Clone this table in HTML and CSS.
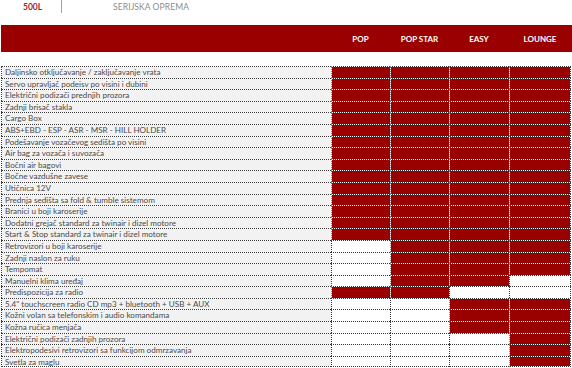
FILE: index.html
```html
<!DOCTYPE html>
<html lang="sr">
<head>
<meta charset="utf-8">
<title>500L – Serijska oprema</title>
<link rel="stylesheet" href="styles.css">
</head>
<body>
<header class="topbar">
  <span class="model">500L</span>
  <span class="divider"></span>
  <span class="section">SERIJSKA OPREMA</span>
</header>
<div class="banner">
  <span></span>
  <span class="trim">POP</span>
  <span class="trim">POP STAR</span>
  <span class="trim">EASY</span>
  <span class="trim">LOUNGE</span>
</div>
<div class="grid" id="grid"></div>
<script src="app.js"></script>
</body>
</html>
```
FILE: styles.css
```css
html, body { margin: 0; padding: 0; background: #fff; }
body { width: 572px; height: 368px; overflow: hidden; font-family: Lato, "Open Sans", sans-serif; }
.topbar { display: flex; align-items: center; height: 13px; }
.model { margin-left: 23px; width: 20px; font-size: 8.5px; font-weight: 700; color: #a3262a; }
.divider { margin-left: 18px; width: 1px; height: 13px; background: #a0a0a0; }
.section { margin-left: 51px; font-size: 8.5px; color: #8c8c8c; letter-spacing: 0.1px; }
.banner {
  margin: 12px 0 0 1px; height: 27px; background: #9b0000;
  display: grid; grid-template-columns: 330px 59px 59px 60px 62px; align-items: center;
}
.trim { color: #fff; font-weight: 700; font-size: 8px; text-align: center; padding-top: 1px; }
.grid {
  margin: 14px 0 0 1px; width: 570px; background: #fff;
  display: grid; grid-template-columns: 330px 59px 59px 60px 62px; grid-auto-rows: 11.6px;
}
.cell { box-sizing: border-box; border-top: 1px dotted #3a3a3a; border-left: 1px dotted #3a3a3a; background-clip: padding-box; }
.label { background-color: #f2f2f2; color: #4a4a4a; font-size: 8.1px; line-height: 11px; padding-left: 3px; white-space: nowrap; overflow: hidden; }
.on { background-color: #990000; border-left-color: #8a8a8a; }
.off { background-color: #fff; }
.last { border-right: 1px dotted #3a3a3a; }
.bottom { border-bottom: 1px dotted #3a3a3a; }
```
FILE: app.js
```js
const rows = [
  ["Daljinsko otključavanje / zaključavanje vrata", "1111"],
  ["Servo upravljač podeisv po visini i dubini", "1111"],
  ["Električni podizači prednjih prozora", "1111"],
  ["Zadnji brisač stakla", "1111"],
  ["Cargo Box", "1111"],
  ["ABS+EBD - ESP - ASR - MSR - HILL HOLDER", "1111"],
  ["Podešavanje vozačevog sedišta po visini", "1111"],
  ["Air bag za vozača i suvozača", "1111"],
  ["Bočni air bagovi", "1111"],
  ["Bočne vazdušne zavese", "1111"],
  ["Utičnica 12V", "1111"],
  ["Prednja sedišta sa fold & tumble sistemom", "1111"],
  ["Branici u boji karoserije", "1111"],
  ["Dodatni grejač standard za twinair i dizel motore", "1111"],
  ["Start & Stop standard za twinair i dizel motore", "1111"],
  ["Retrovizori u boji karoserije", "0111"],
  ["Zadnji naslon za ruku", "0111"],
  ["Tempomat", "0111"],
  ["Manuelni klima uređaj", "0110"],
  ["Predispozicija za radio", "1100"],
  ["5.4\" touchscreen radio CD mp3 + bluetooth + USB + AUX", "0011"],
  ["Kožni volan sa telefonskim i audio komandama", "0011"],
  ["Kožna ručica menjača", "0011"],
  ["Električni podizači zadnjih prozora", "0001"],
  ["Elektropodesivi retrovizori sa funkcijom odmrzavanja", "0001"],
  ["Svetla za maglu", "0001"]
];
const grid = document.getElementById("grid");
rows.forEach(([label, marks], r) => {
  const isLast = r === rows.length - 1;
  const l = document.createElement("div");
  l.className = "cell label" + (isLast ? " bottom" : "");
  l.textContent = label;
  grid.appendChild(l);
  [...marks].forEach((m, i) => {
    const c = document.createElement("div");
    c.className = "cell " + (m === "1" ? "on" : "off") + (i === 3 ? " last" : "") + (isLast ? " bottom" : "");
    grid.appendChild(c);
  });
});
```
